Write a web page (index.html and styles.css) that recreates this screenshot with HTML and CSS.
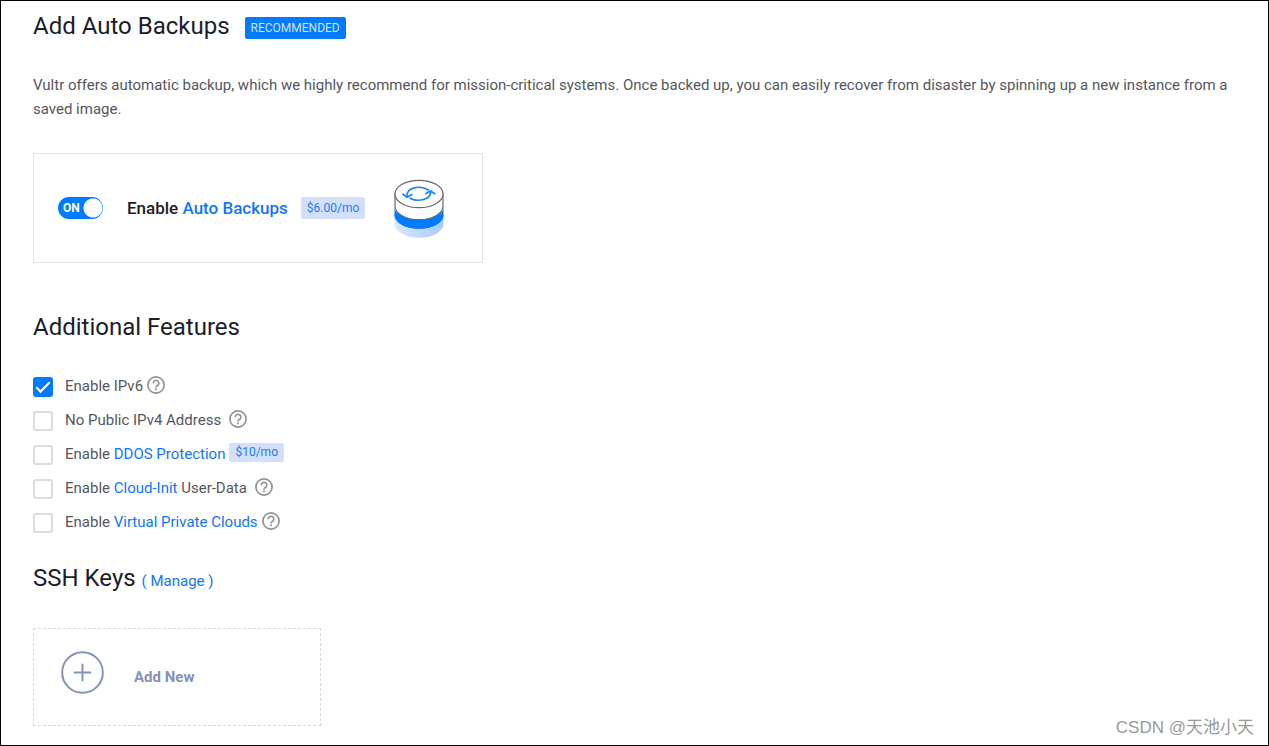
FILE: index.html
```html
<!DOCTYPE html>
<html lang="en">
<head>
<meta charset="utf-8">
<meta name="viewport" content="width=device-width, initial-scale=1">
<title>Deploy New Instance</title>
<link rel="stylesheet" href="styles.css">
</head>
<body>
<svg class="sprite" aria-hidden="true">
  <symbol id="help" viewBox="0 0 18 18">
    <circle cx="9" cy="9" r="8.100" fill="none" stroke="currentColor" stroke-width="1.700"/>
    <path d="M6.200 7.300a2.800 2.800 0 1 1 4.700 1.900C9.700 10 9 10.200 9 11.400" fill="none" stroke="currentColor" stroke-width="1.700"/>
    <path d="M8.100 12.500h1.800v1.700H8.100z" fill="currentColor"/>
  </symbol>
</svg>
<main class="page">
  <section class="backups">
    <div class="heading">
      <h2 class="title">Add Auto Backups</h2>
      <span class="tag">RECOMMENDED</span>
    </div>
    <p class="intro">Vultr offers automatic backup, which we highly recommend for mission-critical systems. Once backed up, you can easily recover from disaster by spinning up a new instance from a saved image.</p>
    <div class="backup-card">
      <span class="switch">
        <input class="switch-input" type="checkbox" role="switch" id="auto-backups" checked>
        <span class="switch-text" aria-hidden="true">ON</span>
      </span>
      <label class="backup-label" for="auto-backups">Enable <a class="link" href="#backups">Auto Backups</a></label>
      <span class="price">$6.00/mo</span>
      <svg class="disk" viewBox="0 0 50 60" aria-hidden="true">
        <defs>
          <linearGradient id="shade">
            <stop offset="0" stop-color="#dce8fd"/>
            <stop offset="1" stop-color="#a9c9ff"/>
          </linearGradient>
        </defs>
        <path d="M.5 37v8A24.500 13.700 0 0 0 49.500 45v-8z" fill="url(#shade)"/>
        <path d="M.5 35v1A24.500 13.700 0 0 0 49.500 36v-1z" fill="#007bff"/>
        <path d="M1 15v12A24 13.700 0 0 0 49 27V15z" fill="#fff" stroke="#66686e" stroke-width="1.200"/>
        <ellipse cx="25" cy="15" rx="24" ry="13.700" fill="#fff" stroke="#66686e" stroke-width="1.200"/>
        <path d="M.5 28v8A24.500 13.700 0 0 0 49.500 36v-8A24.500 13.200 0 0 1 .5 28z" fill="#007bff"/>
        <g fill="none" stroke="#1482ff" stroke-width="1.700" stroke-linecap="round" stroke-linejoin="round">
          <path d="M13 17.500C12 8.500 26 5.800 34.500 11"/>
          <path d="M9 15.200l4 3 4.800-2.700"/>
          <path d="M36.700 12.700C37 20.500 24 23.500 16.200 19.200"/>
          <path d="M32 14.500l4.700-2.500 4 2.700"/>
        </g>
      </svg>
    </div>
  </section>

  <section class="features">
    <h2 class="title">Additional Features</h2>
    <ul class="feature-list">
      <li class="feature">
        <input class="check" type="checkbox" id="ipv6" checked>
        <label for="ipv6">Enable IPv6</label>
        <svg class="help" role="img" aria-label="Help"><use href="#help"/></svg>
      </li>
      <li class="feature">
        <input class="check" type="checkbox" id="no-ipv4">
        <label for="no-ipv4">No Public IPv4 Address</label>
        <svg class="help help-spaced" role="img" aria-label="Help"><use href="#help"/></svg>
      </li>
      <li class="feature">
        <input class="check" type="checkbox" id="ddos">
        <label for="ddos">Enable <a class="link" href="#ddos-protection">DDOS Protection</a></label>
        <span class="price price-small">$10/mo</span>
      </li>
      <li class="feature">
        <input class="check" type="checkbox" id="cloud-init">
        <label for="cloud-init">Enable <a class="link" href="#cloud-init-docs">Cloud-Init</a> User-Data</label>
        <svg class="help help-spaced" role="img" aria-label="Help"><use href="#help"/></svg>
      </li>
      <li class="feature">
        <input class="check" type="checkbox" id="vpc">
        <label for="vpc">Enable <a class="link" href="#vpc-docs">Virtual Private Clouds</a></label>
        <svg class="help" role="img" aria-label="Help"><use href="#help"/></svg>
      </li>
    </ul>
  </section>

  <section class="keys">
    <h2 class="title">SSH Keys <a class="link manage" href="#manage">( Manage )</a></h2>
    <button class="add-new" type="button">
      <svg class="plus" viewBox="0 0 44 44" aria-hidden="true">
        <circle cx="22" cy="22" r="20.800" fill="none" stroke="#8592b3" stroke-width="2"/>
        <path d="M22 13v18M13 22h18" stroke="#8592b3" stroke-width="2"/>
      </svg>
      <span>Add New</span>
    </button>
  </section>
  <div class="watermark">CSDN @天池小天</div>
</main>
</body>
</html>
```
FILE: styles.css
```css
*,
*::before {
  box-sizing: border-box;
}

body {
  margin: 0;
  background: #fff;
  color: #55575c;
  font: 15px/24px Roboto, "Liberation Sans", "Noto Sans CJK SC", sans-serif;
}

.sprite {
  position: absolute;
  width: 0;
  height: 0;
}

.page {
  position: relative;
  min-height: 100vh;
  padding: 9px 32px 16px;
  border: 1px solid #000;
}

.heading {
  display: flex;
  align-items: center;
  gap: 15px;
}

.title {
  margin: 0;
  color: #1b1d29;
  font-size: 24px;
  font-weight: 400;
  line-height: 32px;
}

.tag {
  margin-top: 4px;
  padding: 0 6px;
  border-radius: 2px;
  background: #007bff;
  color: #cfe3ff;
  font-size: 12px;
  line-height: 22px;
}

.intro {
  margin: 31px 0 32px;
}

.link {
  color: #0f75fb;
  text-decoration: none;
}

.backup-card {
  display: flex;
  align-items: center;
  max-width: 450px;
  height: 110px;
  padding: 0 24px;
  border: 1px solid #e6e6e6;
}

.switch {
  display: grid;
  align-items: center;
  margin-right: 24px;
}

.switch-input {
  grid-area: 1 / 1;
  width: 45px;
  height: 22px;
  margin: 0;
  border-radius: 11px;
  appearance: none;
  background: radial-gradient(circle at 35px 11px, #fff 9px, #007bff 10px);
}

.switch-text {
  grid-area: 1 / 1;
  padding-left: 5px;
  color: #fff;
  font-size: 12px;
  font-weight: 700;
  pointer-events: none;
}

.backup-label {
  color: #1b1d29;
  font-size: 17px;
  font-weight: 500;
}

.price {
  margin-left: 13px;
  padding: 0 6px;
  border-radius: 2px;
  background: #d4dffb;
  color: #1a7cfb;
  font-size: 12px;
  line-height: 22px;
}

.price-small {
  margin: 0 0 3px 4px;
  line-height: 19px;
}

.disk {
  width: 50px;
  height: 60px;
  margin: 2px 0 0 29px;
}

.features {
  margin-top: 48px;
}

.feature-list {
  margin: 26px 0 23px;
  padding: 0;
  list-style: none;
}

.feature {
  display: flex;
  align-items: center;
  height: 34px;
}

.check {
  width: 20px;
  height: 20px;
  margin: 2px 12px 0 0;
  border: 2px solid #dcdcdc;
  border-radius: 3px;
  appearance: none;
}

.check:checked {
  border-color: #007bff;
  background: #007bff;
}

.check:checked::before {
  display: block;
  width: 14px;
  height: 7px;
  margin: 3px 1px;
  border: solid #fff;
  border-width: 0 0 2px 2px;
  content: "";
  transform: rotate(-45deg);
}

.help {
  width: 18px;
  height: 18px;
  margin: 0 0 2px 4px;
  color: #909296;
}

.help-spaced {
  margin-left: 8px;
}

.manage {
  font-size: 15px;
}

.add-new {
  display: flex;
  align-items: center;
  gap: 30px;
  width: 288px;
  max-width: 100%;
  height: 98px;
  margin-top: 31px;
  padding: 0 27px;
  border: 1px dashed #d9d9d9;
  background: none;
  color: #8592b3;
  font: inherit;
  font-weight: 700;
}

.plus {
  width: 43px;
  height: 43px;
  margin-bottom: 10px;
}

.watermark {
  position: absolute;
  right: 14px;
  bottom: 5px;
  color: #999;
  font-family: "Liberation Sans", "Noto Sans CJK SC", sans-serif;
  font-size: 17px;
}
```
